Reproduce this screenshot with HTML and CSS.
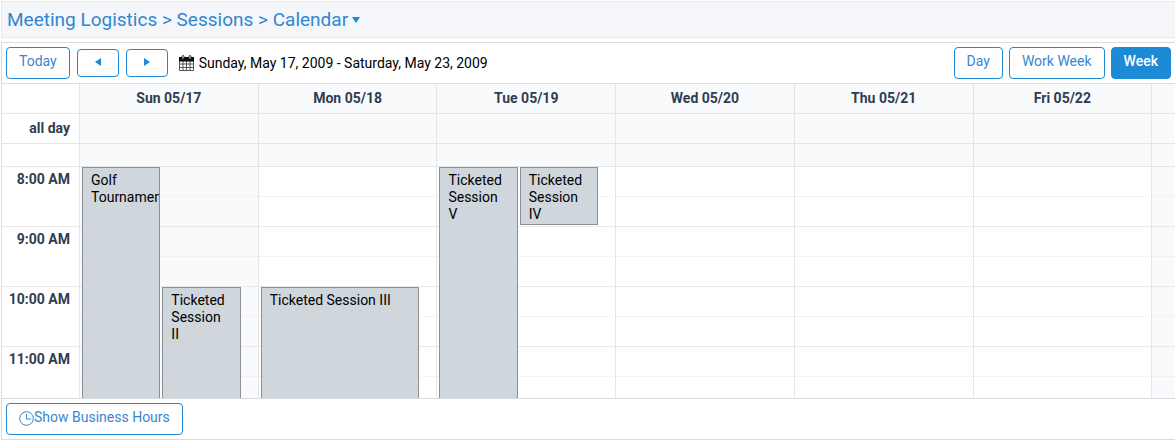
FILE: index.html
```html
<!DOCTYPE html>
<html lang="en">
<head>
<meta charset="utf-8">
<title>Calendar</title>
<link rel="stylesheet" href="styles.css">
</head>
<body>
<header class="breadcrumb">
  <nav class="trail"><a href="#">Meeting Logistics</a> &gt; <a href="#">Sessions</a> &gt; <a href="#">Calendar</a></nav>
  <svg class="caret" viewBox="0 0 8 6"><path d="M0 0h8L4 6z"/></svg>
</header>
<main class="scheduler">
  <div class="toolbar">
    <button class="btn" type="button">Today</button>
    <button class="btn arrow" type="button"><svg viewBox="0 0 6 8"><path d="M6 0v8L0 4z"/></svg></button>
    <button class="btn arrow" type="button"><svg viewBox="0 0 6 8"><path d="M0 0v8l6-4z"/></svg></button>
    <div class="range">
      <svg class="cal-icon" viewBox="0 0 16 16">
        <path d="M.5 5.500v10h14v-10M4 6v9.500M7.500 6v9.500M11 6v9.500M.5 9h14M.5 12.500h14" fill="none" stroke="#555" stroke-width="1"/>
        <path d="M0 2h15v4.500H0z" fill="#0a0a0a"/>
        <path d="M3 4V1.500a1 1 0 0 1 2 0V4zM10 4V1.500a1 1 0 0 1 2 0V4z" fill="#ddd" stroke="#333" stroke-width="1"/>
      </svg>
      <span>Sunday, May 17, 2009 - Saturday, May 23, 2009</span>
    </div>
    <div class="views">
      <button class="btn" type="button">Day</button>
      <button class="btn" type="button">Work Week</button>
      <button class="btn active" type="button">Week</button>
    </div>
  </div>
  <div class="viewport">
    <table class="week">
      <colgroup><col class="time-col"><col><col><col><col><col><col><col></colgroup>
      <thead>
        <tr><td class="corner"></td><th>Sun 05/17</th><th>Mon 05/18</th><th>Tue 05/19</th><th>Wed 05/20</th><th>Thu 05/21</th><th>Fri 05/22</th><th></th></tr>
        <tr><th class="corner label">all day</th><td></td><td></td><td></td><td></td><td></td><td></td><td></td></tr>
        <tr class="spacer"><td class="corner"></td><td></td><td></td><td></td><td></td><td></td><td></td><td></td></tr>
      </thead>
      <tbody>
        <tr class="half">
          <th class="time" rowspan="2">8:00 AM</th>
          <td class="off"><div class="events"><div class="event long">Golf Tournament</div><div class="event late">Ticketed Session II</div></div></td>
          <td><div class="events"><div class="event late">Ticketed Session III</div></div></td>
          <td><div class="events"><div class="event long">Ticketed Session V</div><div class="event hour">Ticketed Session IV</div></div></td>
          <td></td><td></td><td></td><td class="off"></td>
        </tr>
        <tr><td class="off"></td><td></td><td></td><td></td><td></td><td></td><td class="off"></td></tr>
        <tr class="half"><th class="time" rowspan="2">9:00 AM</th><td class="off"></td><td></td><td></td><td></td><td></td><td></td><td class="off"></td></tr>
        <tr><td class="off"></td><td></td><td></td><td></td><td></td><td></td><td class="off"></td></tr>
        <tr class="half"><th class="time" rowspan="2">10:00 AM</th><td class="off"></td><td></td><td></td><td></td><td></td><td></td><td class="off"></td></tr>
        <tr><td class="off"></td><td></td><td></td><td></td><td></td><td></td><td class="off"></td></tr>
        <tr class="half"><th class="time" rowspan="2">11:00 AM</th><td class="off"></td><td></td><td></td><td></td><td></td><td></td><td class="off"></td></tr>
        <tr><td class="off"></td><td></td><td></td><td></td><td></td><td></td><td class="off"></td></tr>
      </tbody>
    </table>
  </div>
  <footer class="footer">
    <button class="btn" type="button"><svg class="clock" viewBox="0 0 15 15"><circle cx="7.500" cy="7.500" r="6.800"/><path d="M7.500 3v5H12"/></svg>Show Business Hours</button>
  </footer>
</main>
</body>
</html>
```
FILE: styles.css
```css
* { box-sizing: border-box; }

body {
  margin: 0;
  padding: 1px 0 2px 1px;
  height: 100vh;
  display: flex;
  flex-direction: column;
  gap: 4px;
  overflow: hidden;
  background: #fff;
  color: #000;
  font: 14px/17px Roboto, "Liberation Sans", sans-serif;
}

.breadcrumb {
  display: flex;
  align-items: center;
  gap: 4px;
  padding: 6px 5px 5px;
  border: 1px solid #e9e9ec;
  border-right: 0;
  background: #f5f6fa;
  color: #2f87d0;
  font-size: 19px;
  line-height: 24px;
}
.breadcrumb a { color: inherit; text-decoration: none; }
.caret { width: 8px; height: 6px; fill: #1c8ad5; }

.scheduler {
  flex: 1;
  min-height: 0;
  display: flex;
  flex-direction: column;
  border: 1px solid #d9dbde;
  border-right: 0;
}

.toolbar, .footer { display: flex; align-items: center; padding: 4px; }
.toolbar { gap: 7px; border-bottom: 1px solid #dcdddf; }
.footer { border-top: 1px solid #d9dbde; }

.btn {
  display: flex;
  align-items: center;
  justify-content: center;
  height: 32px;
  padding: 0 12px 3px;
  border: 1px solid #1c8ad5;
  border-radius: 4px;
  background: #fff;
  color: #3a86d0;
  font: inherit;
}
.btn.active { background: #1c8ad5; color: #fff; font-weight: 500; }
.btn.arrow { width: 42px; height: 28px; padding: 0 0 2px; }
.arrow svg { width: 6px; height: 8px; fill: #1c8ad5; }

.range { display: flex; align-items: center; gap: 4px; padding-left: 4px; }
.cal-icon { width: 16px; height: 16px; }
.views { display: flex; gap: 6px; margin-left: auto; }
.clock { width: 15px; height: 15px; margin-top: 2px; fill: none; stroke: #2f87d0; }

.viewport { flex: 1; min-height: 0; overflow: hidden; }

/* The week is wider than the viewport, so the last day runs off the side. */
.week {
  width: 113.3%;
  table-layout: fixed;
  border-collapse: separate;
  border-spacing: 0;
  color: #2f3d52;
}
.time-col { width: 78px; }
.week th, .week td {
  height: 30px;
  padding: 0;
  border-right: 1px solid #e4e5e7;
  border-bottom: 1px solid #e9e9eb;
}
.week th { font-weight: 700; }
.week thead th, .week thead td { background: #f9fafc; border-bottom-color: #e4e5e7; }
.week thead .corner { background: #fff; }
.week .label { padding-right: 9px; text-align: right; }
.week .spacer td { height: 23px; }
.week tbody td { position: relative; }
.week .half td { border-bottom-style: dotted; }
.week .off { background: #f9fafc; }
.week .time { height: 60px; padding: 4px 9px 0 0; text-align: right; vertical-align: top; }

.events {
  position: absolute;
  z-index: 1;
  top: 0;
  left: 2px;
  right: 17px;
  display: flex;
  align-items: flex-start;
  gap: 2px;
}
.event {
  flex: 1;
  min-width: 0;
  padding: 4px 8px;
  overflow: hidden;
  border: 1px solid #8c9094;
  background: #cfd7dd;
  color: #000;
}
.event.long { height: 240px; }
.event.late { height: 120px; margin-top: 120px; }
.event.hour { height: 58px; padding-bottom: 0; }
```
